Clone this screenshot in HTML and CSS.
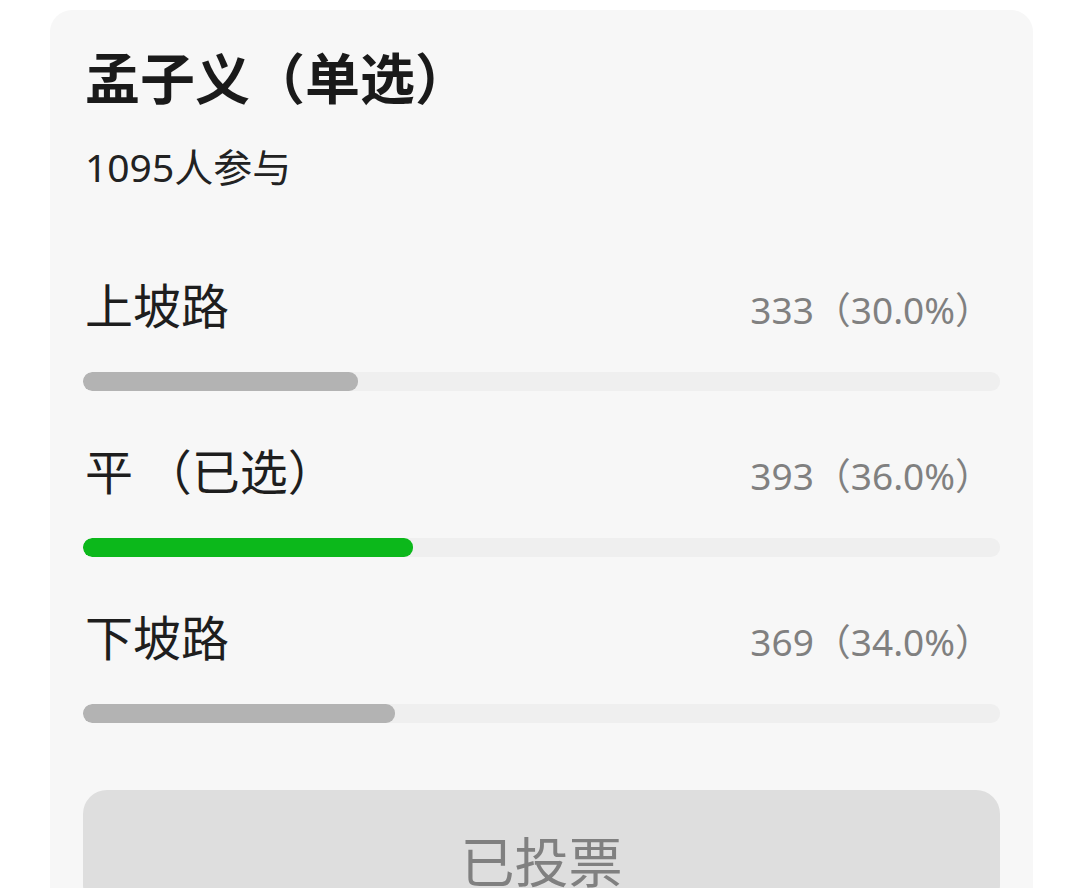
FILE: index.html
```html
<!DOCTYPE html>
<html lang="zh-CN">
<head>
<meta charset="utf-8">
<link rel="stylesheet" href="styles.css">
</head>
<body>
<div class="card">
  <div class="title">孟子义（单选）</div>
  <div class="count">1095人参与</div>
  <div class="option">
    <div class="opt-head">
      <span class="opt-name">上坡路</span>
      <span class="opt-stat">333（30.0%）</span>
    </div>
    <div class="track"><div class="fill" style="width:30%"></div></div>
  </div>
  <div class="option">
    <div class="opt-head">
      <span class="opt-name">平 （已选）</span>
      <span class="opt-stat">393（36.0%）</span>
    </div>
    <div class="track"><div class="fill selected" style="width:36%"></div></div>
  </div>
  <div class="option">
    <div class="opt-head">
      <span class="opt-name">下坡路</span>
      <span class="opt-stat">369（34.0%）</span>
    </div>
    <div class="track"><div class="fill" style="width:34%"></div></div>
  </div>
  <div class="button">已投票</div>
</div>
</body>
</html>
```
FILE: styles.css
```css
html, body {
  margin: 0;
  padding: 0;
  background: #ffffff;
  overflow: hidden;
}
body {
  font-family: "Noto Sans", "Noto Sans CJK SC", sans-serif;
  color: #1e1e1e;
}
.card {
  margin: 10px 0 0 50px;
  width: 983px;
  box-sizing: border-box;
  padding: 33px 33px 0 33px;
  background: #f7f7f7;
  border-radius: 22px;
  height: 1000px;
}
.title {
  font-family: "Noto Sans CJK SC", sans-serif;
  font-size: 55px;
  font-weight: 700;
  line-height: 64px;
  padding-left: 2px;
  color: #1a1a1a;
}
.count {
  margin-top: 35px;
  font-size: 39px;
  line-height: 50px;
  padding-left: 2px;
  color: #222;
}
.option {
  margin-top: 81px;
}
.option + .option {
  margin-top: 48px;
}
.opt-head {
  display: flex;
  justify-content: space-between;
  align-items: baseline;
  height: 60px;
}
.opt-name {
  font-family: "Noto Sans CJK SC", sans-serif;
  font-size: 48px;
  line-height: 60px;
  padding-left: 2px;
  color: #1e1e1e;
}
.opt-stat {
  font-size: 37px;
  line-height: 60px;
  color: #808080;
  margin-right: 8px;
}
.track {
  margin-top: 39px;
  height: 19px;
  background: #efefef;
  border-radius: 9px;
  overflow: hidden;
}
.fill {
  height: 100%;
  background: #b3b3b3;
  border-radius: 9px;
}
.fill.selected {
  background: #0cb81b;
}
.button {
  margin-top: 67px;
  height: 120px;
  background: #dedede;
  border-radius: 24px;
  font-family: "Noto Sans CJK SC", sans-serif;
  font-size: 54px;
  line-height: 140px;
  text-align: center;
  color: #808080;
}
```
